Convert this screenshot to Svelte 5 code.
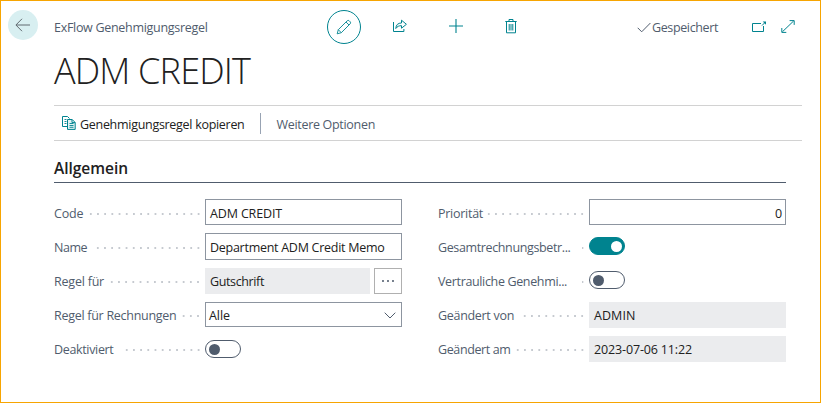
<script>
  const left = [
    { label: 'Code', w: 29.5, dots: 16, kind: 'input', value: 'ADM CREDIT', vw: 72 },
    { label: 'Name', w: 33, dots: 15, kind: 'input tall', value: 'Department ADM Credit Memo', vw: 174.5 },
    { label: 'Regel für', w: 50, dots: 13, kind: 'lookup', value: 'Gutschrift', vw: 54 },
    { label: 'Regel für Rechnungen', w: 122.5, dots: 3, kind: 'select', value: 'Alle', vw: 21 },
    { label: 'Deaktiviert', w: 59.5, dots: 11, kind: 'toggle', on: false }
  ];
  const right = [
    { label: 'Priorität', w: 45, dots: 14, kind: 'number', value: '0', vw: 7 },
    { label: 'Gesamtrechnungsbetr...', w: 132.5, dots: 1, kind: 'toggle', on: true },
    { label: 'Vertrauliche Genehmi...', w: 129, dots: 1, kind: 'toggle', on: false },
    { label: 'Geändert von', w: 76, dots: 9, kind: 'readonly', value: 'ADMIN', vw: 41.5 },
    { label: 'Geändert am', w: 72.5, dots: 10, kind: 'readonly', value: '2023-07-06 11:22', vw: 98 }
  ];

  // Spreads the tracking of a text over the width reserved for it.
  function fit(node, width) {
    const natural = node.getBoundingClientRect().width;
    const spacing = (width - natural) / node.textContent.length;
    node.style.letterSpacing = `${spacing.toFixed(3)}px`;
  }
</script>

{#snippet field(f, i)}
  <div class="row">
    <div class="caption">
      <span class="label" use:fit={f.w}>{f.label}</span>
      <span class="dots" style:width="{f.dots * 7.2}px"></span>
    </div>
    <div class="control" class:lower={i > 2 || f.kind === 'lookup'}>
      {#if f.kind === 'toggle'}
        <span class="toggle" class:on={f.on}><i></i></span>
      {:else}
        <div class="box {f.kind}"><span use:fit={f.vw}>{f.value}</span>
          {#if f.kind === 'select'}
            <svg width="12" height="7" viewBox="0 0 12 7"><path d="M.7.7 6 6 11.3.7" /></svg>
          {/if}
        </div>
        {#if f.kind === 'lookup'}
          <div class="more"><b></b><b></b><b></b></div>
        {/if}
      {/if}
    </div>
  </div>
{/snippet}

<div class="page">
  <header>
    <div class="back">
      <svg width="16" height="14" viewBox="0 0 16 14"><path d="M7 .8.9 7 7 13.2M1 7h14" /></svg>
    </div>
    <div class="crumb"><span use:fit={153.5}>ExFlow Genehmigungsregel</span></div>
    <div class="actions">
      <div class="edit">
        <svg width="16" height="16" viewBox="0 0 16 16"><path d="M1.2 14.8 2.3 10.7 11.2 1.8a1.5 1.5 0 0 1 2 0l1 1a1.5 1.5 0 0 1 0 2L5.3 13.7Z M2.3 10.7l3 3M10 3l3 3" /></svg>
      </div>
      <svg class="share" width="16" height="14" viewBox="0 0 16 14"><path d="M1.5 3v9.5h10.4V10M3.8 9.5C4 5.8 6 4 9.5 4V1.2L14.4 5.3 9.5 9.2V6.7C7 6.6 5.3 7.4 3.8 9.5Z" /></svg>
      <svg class="plus" width="14" height="14" viewBox="0 0 14 14"><path d="M7 0v14M0 7h14" /></svg>
      <svg class="trash" width="12" height="15" viewBox="0 0 12 15"><path d="M.3 2.5h11.4M4 2.5V.5h4v2M1.5 2.5v11.3h9V2.5M4.2 5v6.5M6 5v6.5M7.8 5v6.5" /></svg>
    </div>
    <div class="saved">
      <svg width="14" height="11" viewBox="0 0 14 11"><path d="m.7 5.8 4 4L13.4 1" /></svg>
      <span use:fit={66}>Gespeichert</span>
    </div>
    <svg class="popout" width="15" height="12" viewBox="0 0 15 12"><path d="M9 2.5H.5v8h11V5M10 4.5 13.2 1.3" /><path class="tip" d="M10.7.5H14v3.3Z" /></svg>
    <svg class="expand" width="14" height="13" viewBox="0 0 14 13"><path d="M1.4 11.8 12.6 1M8.6.6h4.6v4.3M.8 8v4.4h4.5" /></svg>
  </header>

  <h1><span use:fit={196}>ADM CREDIT</span></h1>

  <nav>
    <svg width="14" height="14" viewBox="0 0 14 14">
      <path d="M5 10.5H.5V.5h5l2 2" /><path class="thin" d="M2.5 3.5h2M2.5 5.5h2M2.5 7.5h2" />
      <path class="sheet" d="M5.5 3.5h4.7l3 3v6.9H5.5ZM10 3.6v3h3" /><path class="thin" d="M7.5 7.5h4M7.5 9.5h4M7.5 11.3h4" />
    </svg>
    <div class="copy"><span use:fit={164.5}>Genehmigungsregel kopieren</span></div>
    <div class="options"><span use:fit={98.5}>Weitere Optionen</span></div>
  </nav>

  <h2><span use:fit={74}>Allgemein</span></h2>

  <main>
    <section>{#each left as f, i}{@render field(f, i)}{/each}</section>
    <section>{#each right as f, i}{@render field(f, i)}{/each}</section>
  </main>
</div>

<style>
  .page {
    box-sizing: border-box;
    width: 821px;
    height: 403px;
    overflow: hidden;
    border: 1px solid #f7a501;
    background: #fff;
    color: #212121;
    font: 12.5px/18px 'Open Sans', 'Noto Sans', sans-serif;
    white-space: nowrap;
  }
  svg { display: block; flex: none; fill: none; stroke: #00838f; stroke-width: 1; }
  header { display: flex; height: 51px; padding-left: 7px; color: #505c6d; }
  .back {
    display: grid;
    place-items: center;
    width: 30px;
    height: 30px;
    margin-top: 9px;
    border-radius: 50%;
    background: #d8eff1;
  }
  .back svg { stroke: #606a70; }
  .crumb { width: 273px; margin: 18px 0 0 16px; }
  .actions { display: flex; width: 310px; }
  .edit {
    box-sizing: border-box;
    display: grid;
    place-items: center;
    width: 34px;
    height: 34px;
    margin-top: 9px;
    border: 1px solid #00838f;
    border-radius: 50%;
  }
  .edit svg { stroke-width: .9; }
  .share { margin: 18px 0 0 31px; }
  .plus { margin: 18px 0 0 41px; stroke-width: 1.1; }
  .trash { margin: 18px 0 0 42px; }
  .saved { display: flex; width: 113px; }
  .saved svg { margin: 21px 1px 0 0; stroke: #505c6d; }
  .saved span { align-self: flex-start; margin-top: 18px; }
  .popout { margin: 20px 14px 0 2px; }
  .popout .tip { fill: #00838f; stroke: none; }
  .expand { margin-top: 19px; }
  h1 {
    height: 53px;
    margin: 0 0 0 53px;
    font-size: 36px;
    font-weight: 300;
    line-height: 37px;
  }
  nav {
    box-sizing: border-box;
    display: flex;
    align-items: center;
    width: 748px;
    height: 36px;
    margin-left: 53px;
    padding-left: 8px;
    border: solid #d2d2d2;
    border-width: 1px 0;
  }
  nav .thin { stroke-width: .9; }
  nav .sheet { fill: #e2f3f4; }
  .copy { width: 180px; margin-left: 4px; padding-top: 3px; height: 18px; }
  .options {
    height: 18px;
    padding: 3px 0 0 15.5px;
    border-left: 1px solid #98a3b3;
    color: #505c6d;
  }
  h2 {
    box-sizing: border-box;
    width: 732px;
    height: 42px;
    margin: 0 0 16px 53px;
    padding-top: 16px;
    border-bottom: 1px solid #505c6d;
    font-size: 15.5px;
    font-weight: 600;
    line-height: 22px;
  }
  main { display: flex; gap: 36px; padding-left: 53px; }
  section { display: grid; width: 348px; gap: 8px; }
  .row { display: flex; height: 26px; }
  .caption {
    display: flex;
    justify-content: space-between;
    width: 151px;
    padding-top: 6px;
    box-sizing: border-box;
    color: #505c6d;
  }
  .dots {
    flex: none;
    height: 2px;
    margin: 8px 3px 0 -4px;
    background: radial-gradient(circle at 50% 50%, #c6cad0 .7px, transparent 1.2px) right / 7.2px 2px repeat-x;
  }
  .label { flex: none; height: 18px; }
  .control { display: flex; align-items: center; width: 197px; }
  .lower { margin: 1px 0 -1px; }
  .box {
    box-sizing: border-box;
    display: flex;
    flex: 1;
    height: 26px;
    padding: 5px 4px 0;
    border: 1px solid #8d95a0;
  }
  .box span { flex: none; height: 18px; }
  .tall { height: 27px; margin-bottom: -1px; }
  .lookup, .readonly { padding-top: 4px; border-color: #ebecee; background: #ebecee; }
  .number { justify-content: flex-end; padding-right: 3px; }
  .select { justify-content: space-between; padding: 4px 5px 0 3px; height: 25px; margin-bottom: 1px; }
  .select svg { margin-top: 5px; stroke: #505c6d; }
  .more {
    box-sizing: border-box;
    display: flex;
    align-items: center;
    justify-content: center;
    gap: 3.5px;
    width: 28px;
    height: 26px;
    margin-left: 4px;
    border: 1px solid #b0b0b0;
  }
  .more b { width: 1.8px; height: 1.8px; background: #505c6d; border-radius: 50%; }
  .toggle {
    box-sizing: border-box;
    display: flex;
    align-items: center;
    width: 36px;
    height: 18px;
    padding: 0 3px;
    border: 1px solid #505c6d;
    border-radius: 9px;
  }
  .toggle i { width: 11px; height: 11px; border-radius: 50%; background: #505c6d; }
  .on { justify-content: flex-end; padding-right: 2px; border-color: #00838f; background: #00838f; }
  .on i { background: #fff; }
</style>
